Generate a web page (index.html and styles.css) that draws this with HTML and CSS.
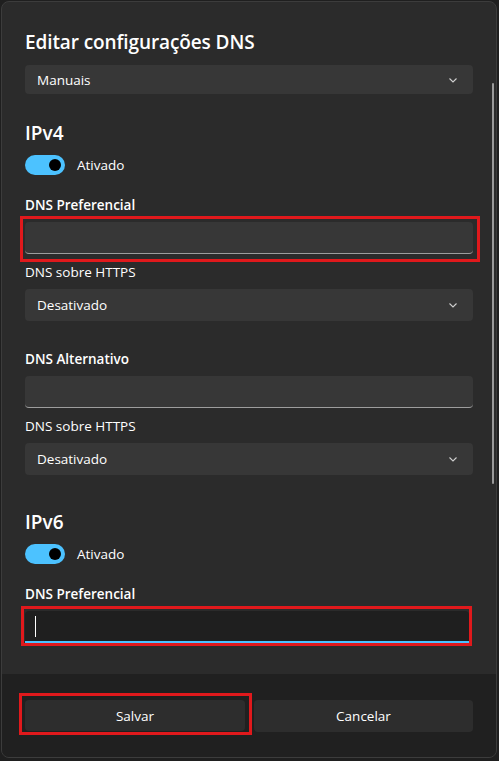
FILE: index.html
```html
<!DOCTYPE html>
<html lang="pt">
<head>
<meta charset="utf-8">
<title>Editar configurações DNS</title>
<link rel="stylesheet" href="styles.css">
</head>
<body>
<div class="window">
  <div class="content">
    <h1 class="title">Editar configurações DNS</h1>
    <div class="select select-top"><span>Manuais</span><svg class="chev" viewBox="0 0 12 12"><path d="M2.5 4.5 L6 8 L9.5 4.5"/></svg></div>

    <h2 class="section">IPv4</h2>
    <div class="toggle-row"><span class="toggle"><span class="knob"></span></span><span>Ativado</span></div>

    <div class="label">DNS Preferencial</div>
    <div class="mark mark-a"><div class="input"></div></div>
    <div class="sublabel sublabel-a">DNS sobre HTTPS</div>
    <div class="select"><span>Desativado</span><svg class="chev" viewBox="0 0 12 12"><path d="M2.5 4.5 L6 8 L9.5 4.5"/></svg></div>

    <div class="label label-alt">DNS Alternativo</div>
    <div class="input plain"></div>
    <div class="sublabel">DNS sobre HTTPS</div>
    <div class="select"><span>Desativado</span><svg class="chev" viewBox="0 0 12 12"><path d="M2.5 4.5 L6 8 L9.5 4.5"/></svg></div>

    <h2 class="section section-6">IPv6</h2>
    <div class="toggle-row"><span class="toggle"><span class="knob"></span></span><span>Ativado</span></div>

    <div class="label">DNS Preferencial</div>
    <div class="mark mark-b"><div class="input focused"><span class="caret"></span></div></div>

    <div class="scrollbar"></div>
  </div>
  <div class="footer">
    <div class="mark mark-btn"><button class="btn">Salvar</button></div>
    <button class="btn btn-cancel">Cancelar</button>
  </div>
</div>
</body>
</html>
```
FILE: styles.css
```css
html, body {
  margin: 0;
  padding: 0;
  background: #1f1f1f;
}
body {
  font-family: "Segoe UI", "Open Sans", "Noto Sans", sans-serif;
  color: #ffffff;
  width: 499px;
  height: 761px;
  overflow: hidden;
}
.window {
  margin: 1px 0 0 1px;
  width: 494px;
  height: 755px;
  border: 1px solid #3c3c3c;
  border-radius: 8px;
  background: #2b2b2b;
  overflow: hidden;
  display: flex;
  flex-direction: column;
}
.content {
  position: relative;
  height: 672px;
  padding: 0 23px 0 23px;
  overflow: hidden;
  flex: none;
}
.title {
  margin: 0;
  padding-top: 24px;
  height: 39px;
  font-size: 19px;
  font-weight: 600;
  line-height: 32px;
  letter-spacing: -0.1px;
}
.select {
  height: 32px;
  border-radius: 4px;
  background: #373737;
  display: flex;
  align-items: center;
  justify-content: space-between;
  padding: 0 14px 0 12px;
  font-size: 13.5px;
  box-sizing: border-box;
  margin-top: 7px;
}
.select-top {
  height: 29px;
  margin-top: 0;
}
.chev {
  width: 12px;
  height: 12px;
  fill: none;
  stroke: #cfcfcf;
  stroke-width: 1.1;
}
.section {
  margin: 0;
  margin-top: 26px;
  font-size: 19px;
  font-weight: 600;
  line-height: 26px;
  height: 26px;
}
.section-6 {
  margin-top: 34px;
}
.toggle-row {
  display: flex;
  align-items: center;
  gap: 12px;
  margin-top: 9px;
  font-size: 13.5px;
  height: 20px;
}
.toggle {
  width: 40px;
  height: 20px;
  border-radius: 10px;
  background: #4cc2ff;
  position: relative;
  flex: none;
}
.knob {
  position: absolute;
  right: 4px;
  top: 4px;
  width: 12px;
  height: 12px;
  border-radius: 50%;
  background: #000;
}
.label {
  font-size: 13.5px;
  font-weight: 600;
  margin-top: 20px;
  line-height: 20px;
  height: 20px;
}
.label-alt {
  margin-top: 28px;
}
.sublabel {
  font-size: 13.5px;
  line-height: 20px;
  height: 20px;
  margin-top: 8px;
}
.sublabel-a {
  margin-top: 0;
}
.mark {
  border: 3px solid #e0191c;
}
.mark-a {
  margin: 1px -7px 0 -5px;
  padding: 3px 4px 5px 2px;
}
.mark-b {
  margin: 2px 1px 0 -4px;
  padding: 2px 0 0 1px;
}
.input {
  height: 32px;
  box-sizing: border-box;
  background: #373737;
  border-radius: 4px;
  border-bottom: 1px solid #9d9d9d;
}
.plain {
  margin-top: 7px;
}
.input.focused {
  background: #1f1f1f;
  border-bottom: 2px solid #4cc2ff;
  border-radius: 4px 4px 0 0;
  position: relative;
}
.caret {
  position: absolute;
  left: 10px;
  top: 5px;
  width: 1px;
  height: 21px;
  background: #ffffff;
}
.scrollbar {
  position: absolute;
  right: 2px;
  top: 81px;
  width: 2px;
  height: 401px;
  border-radius: 1px;
  background: #9a9a9a;
}
.footer {
  flex: 1;
  background: #202020;
  display: flex;
  padding: 26px 23px 0 23px;
  box-sizing: border-box;
  align-items: flex-start;
}
.mark-btn {
  margin: -7px 0 0 -6px;
  padding: 4px 4px 1px 3px;
  height: 42px;
  box-sizing: border-box;
  flex: none;
  width: 233px;
}
.btn {
  width: 100%;
  height: 32px;
  border: none;
  border-radius: 4px;
  background: #2d2d2d;
  color: #fff;
  font-family: inherit;
  font-size: 13.5px;
  display: block;
}
.mark-btn .btn {
  height: 31px;
}
.btn-cancel {
  flex: 1;
  margin-left: 2px;
  height: 32px;
}
```
